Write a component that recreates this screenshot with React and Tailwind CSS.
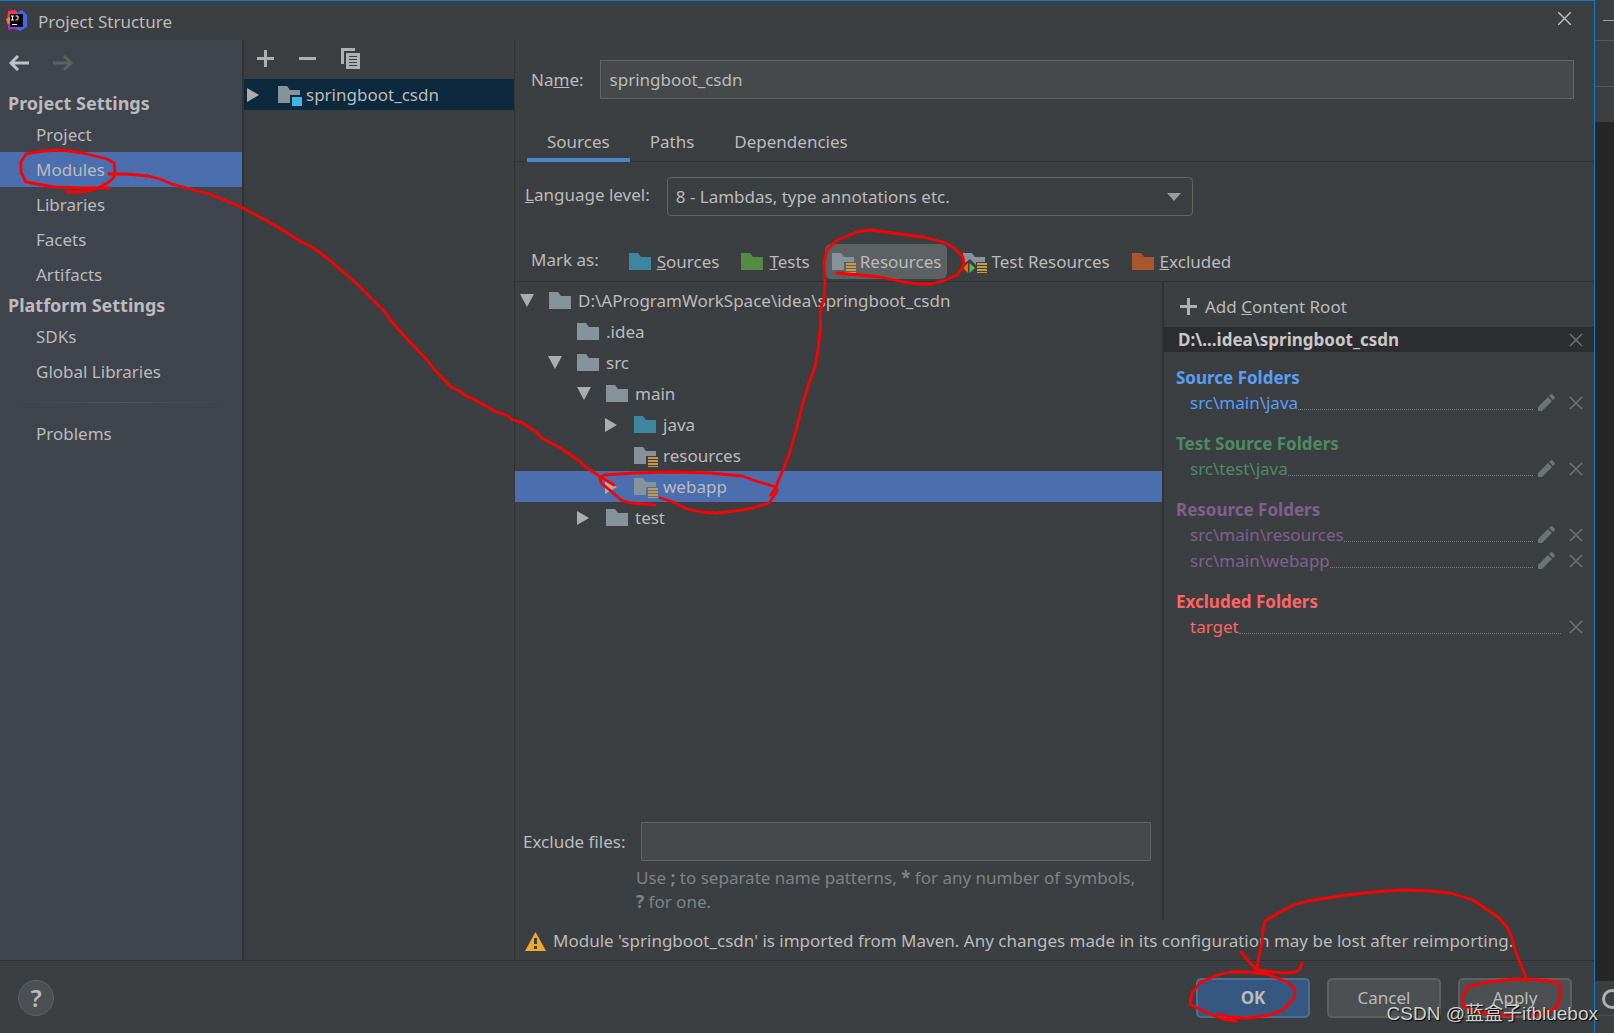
import React, { useState } from 'react';

const FOLDER_GREY = '#87939a';

const Folder = ({ color = FOLDER_GREY, badge }) => (
  <svg width="25" height="22" viewBox="0 0 25 22" className="shrink-0" aria-hidden="true">
    {badge === 'testResources' ? (
      <path d="M1 2h9l3 4h10v5H14v3L8 8l-7 6z" fill={color} />
    ) : (
      <path d={badge ? 'M1 2h9l3 4h10v5H13v8H1z' : 'M1 2h9l3 4h10v13H1z'} fill={color} />
    )}
    {badge === 'module' && <rect x="15" y="13" width="10" height="9" fill="#40b6e0" />}
    {(badge === 'resources' || badge === 'testResources') && (
      <g fill="#c79a45">
        <rect x="15" y="12" width="10" height="2" />
        <rect x="15" y="15" width="10" height="2" />
        <rect x="15" y="18" width="10" height="2" />
        <rect x="15" y="21" width="10" height="1" />
      </g>
    )}
    {badge === 'testResources' && (
      <>
        <path d="M6 12v10L1 17z" fill="#f26522" />
        <path d="M7.500 12l5.500 5l-5.500 5z" fill="#62b543" />
      </>
    )}
  </svg>
);

const Arrow = ({ open }) => (
  <svg width="14" height="14" viewBox="0 0 14 14" className="shrink-0" aria-hidden="true">
    <path d={open ? 'M0 0h14L7 13z' : 'M0 0l12 7L0 14z'} fill="#adadad" />
  </svg>
);

const Cross = () => (
  <svg width="14" height="14" viewBox="0 0 14 14" aria-hidden="true">
    <path d="M1 1l12 12M13 1L1 13" stroke="#6e7375" strokeWidth="1.5" />
  </svg>
);

const Pencil = () => (
  <svg width="18" height="18" viewBox="0 0 18 18" aria-hidden="true">
    <path d="M1 17v-4L11 3l4 4L5 17zM12 2l1.500-1.500q1-.8 2 0l2 2q.8 1 0 2L16 6z" fill="#6e7375" />
  </svg>
);

const Plus = () => (
  <svg width="17" height="17" viewBox="0 0 17 17" aria-hidden="true">
    <path d="M8.500 0v17M0 8.500h17" stroke="#afb1b3" strokeWidth="3" />
  </svg>
);

const Logo = () => (
  <svg width="21" height="21" viewBox="0 0 21 21" aria-hidden="true">
    <path d="M2 1l7-1l4 4l-5 6l-7 1z" fill="#fe315d" />
    <path d="M0 9l4-2l2 7l-4 1z" fill="#fc801d" />
    <path d="M12 2l4-2l5 5v12l-7 4l-6-3z" fill="#3b6bea" />
    <path d="M2 14l4-2l8 8l-7-1l-5 1z" fill="#a333c8" />
    <rect x="4" y="4" width="13" height="13" fill="#050505" />
    <path d="M5 6h3M5 10h3M6.500 6v4M9.500 6H12v3q0 1-2.500 1" stroke="#fff" strokeWidth="1" fill="none" />
    <rect x="6" y="14" width="5" height="1" fill="#fff" />
  </svg>
);

const projectItems = ['Project', 'Modules', 'Libraries', 'Facets', 'Artifacts'];
const platformItems = ['SDKs', 'Global Libraries'];

const tree = [
  { name: 'D:\\AProgramWorkSpace\\idea\\springboot_csdn', pad: 'pl-[5px]', open: true },
  { name: '.idea', pad: 'pl-[33px]' },
  { name: 'src', pad: 'pl-[33px]', open: true },
  { name: 'main', pad: 'pl-[62px]', open: true },
  { name: 'java', pad: 'pl-[90px]', open: false, color: '#3e86a0' },
  { name: 'resources', pad: 'pl-[90px]', badge: 'resources' },
  { name: 'webapp', pad: 'pl-[90px]', open: false, badge: 'resources' },
  { name: 'test', pad: 'pl-[62px]', open: false },
];

const folderGroups = [
  { title: 'Source Folders', color: 'text-[#589df6]', items: ['src\\main\\java'], editable: true },
  { title: 'Test Source Folders', color: 'text-[#4d8b63]', items: ['src\\test\\java'], editable: true },
  { title: 'Resource Folders', color: 'text-[#80608f]', items: ['src\\main\\resources', 'src\\main\\webapp'], editable: true },
  { title: 'Excluded Folders', color: 'text-[#ff6464]', items: ['target'], editable: false },
];

// Red pen strokes drawn over the dialog
const strokes = [
  '109,188 83,188 54,187 26,182 21,172 21,162 26,154 43,151 62,150 83,153 107,159 114,163 115,170 114,177 109,182 100,187 92,190 83,192 67,192',
  '109,174 127,174 148,176 160,179 172,184 190,189 210,194 224,200 243,208 269,222 284,231 300,241 312,247 327,258 341,270 355,282 370,297 386,313 391,321 408,340 427,360 434,369 451,387 459,391 468,397 472,398 496,412 507,415 513,420 521,422 535,431 542,438 562,449 581,462 583,465 599,476 614,485',
  '655,505 631,503 621,500 611,491 601,483 600,478 604,475 635,473 671,472 710,473 742,476 756,481 776,487 777,490 776,493 769,503 753,508 735,511 717,513 700,512 687,509 675,503 667,500 660,498',
  '771,495 777,485 778,481 783,470 790,452 796,430 803,403 809,383 815,367 818,350 820,333 821,308 824,298 825,285 824,262 827,250 837,240 845,237 857,232 870,230 900,234 923,237 943,242 953,247 963,257 964,263 963,267 957,275 943,281 931,284 920,284 903,282 880,277 860,275 837,273',
  '1527,980 1521,965 1515,950 1512,938 1507,927 1498,917 1486,909 1473,900 1460,896 1450,893 1430,891 1403,890 1373,892 1340,896 1308,901 1294,905 1280,912 1265,921 1263,930 1262,943 1259,955 1257,968',
  '1241,952 1250,963 1257,970 1273,972 1285,973 1296,972 1300,969 1302,963',
  '1237,1021 1223,1019 1207,1013 1190,1004 1192,993 1200,983 1217,975 1231,972 1247,972 1267,974 1287,982 1294,988 1295,993 1294,998 1283,1010 1270,1015 1247,1018 1230,1017 1218,1014',
  '1515,1016 1493,1014 1473,1012 1463,1005 1462,997 1468,987 1487,982 1517,979 1540,980 1557,982 1560,988 1561,993 1557,1007 1547,1013 1531,1015',
];

const NavItem = ({ label, active, onClick }) => (
  <button
    type="button"
    onClick={onClick}
    className={`block h-[35px] w-full pl-9 text-left ${active ? 'bg-[#4b6eaf]' : ''}`}
  >
    {label}
  </button>
);

const Sidebar = () => {
  const [active, setActive] = useState('Modules');

  return (
    <nav className="w-[244px] shrink-0 border-r-2 border-[#323232] bg-[#40444d]">
      <div className="flex h-[50px] items-center gap-6 pl-[9px] pb-1">
        <button type="button" aria-label="Back">
          <svg width="20" height="16" viewBox="0 0 20 16">
            <path d="M9 1L2 8l7 7M2 8h18" stroke="#c0c2c4" strokeWidth="3" fill="none" />
          </svg>
        </button>
        <button type="button" aria-label="Forward">
          <svg width="20" height="16" viewBox="0 0 20 16">
            <path d="M11 1l7 7l-7 7M18 8H0" stroke="#5e6062" strokeWidth="3" fill="none" />
          </svg>
        </button>
      </div>
      <h2 className="h-[27px] pl-2 text-lg leading-[27px] font-bold">Project Settings</h2>
      {projectItems.map((label) => (
        <NavItem key={label} label={label} active={active === label} onClick={() => setActive(label)} />
      ))}
      <h2 className="h-[27px] pl-2 text-lg leading-[27px] font-bold">Platform Settings</h2>
      {platformItems.map((label) => (
        <NavItem key={label} label={label} active={active === label} onClick={() => setActive(label)} />
      ))}
      <div className="mx-1 my-[13px] h-px bg-linear-to-r from-transparent via-[#54554f] to-transparent" />
      <NavItem label="Problems" active={active === 'Problems'} onClick={() => setActive('Problems')} />
    </nav>
  );
};

const ModuleList = () => (
  <section className="w-[271px] shrink-0 border-r border-[#323232]">
    <div className="flex h-[39px] items-center gap-[25px] pl-[13px] pb-0.5">
      <button type="button" aria-label="Add"><Plus /></button>
      <button type="button" aria-label="Remove">
        <svg width="17" height="17" viewBox="0 0 17 17">
          <path d="M0 8.500h17" stroke="#afb1b3" strokeWidth="3" />
        </svg>
      </button>
      <button type="button" aria-label="Copy">
        <svg width="20" height="21" viewBox="0 0 20 21">
          <path d="M0 0h14v3H3v13H0z" fill="#afb1b3" />
          <path d="M5 5h14v16H5z" fill="#afb1b3" />
          <path d="M8 8.500h8M8 11.500h8M8 14.500h8M8 17.500h8" stroke="#3c3f41" />
        </svg>
      </button>
    </div>
    <div className="flex h-[31px] items-center bg-[#0d293e] pl-[3px]">
      <Arrow />
      <span className="ml-4 mr-1"><Folder badge="module" /></span>
      <span>springboot_csdn</span>
    </div>
  </section>
);

const MarkButton = ({ color, badge, active, children }) => (
  <button
    type="button"
    className={`flex h-[35px] items-center gap-1 rounded-md px-1.5 whitespace-nowrap ${active ? 'bg-[#5c6164]' : ''}`}
  >
    <Folder color={color} badge={badge} />
    <span>{children}</span>
  </button>
);

const SourceTree = () => (
  <div className="flex min-w-0 flex-1 flex-col border-r-2 border-[#323232]">
    <ul className="flex-1 pt-[3px]">
      {tree.map((row) => (
        <li
          key={row.name}
          className={`flex h-[31px] items-center ${row.pad} ${row.name === 'webapp' ? 'bg-[#4b6eaf]' : ''}`}
        >
          <span className="w-7">{row.open !== undefined && <Arrow open={row.open} />}</span>
          <Folder color={row.color} badge={row.badge} />
          <span className="ml-[5px]">{row.name}</span>
        </li>
      ))}
    </ul>
    <div className="flex items-center gap-[15px] pr-[11px] pl-2">
      <label htmlFor="exclude" className="shrink-0">Exclude files:</label>
      <input
        id="exclude"
        type="text"
        className="h-[39px] min-w-0 flex-1 border border-[#646464] bg-[#45494a] px-2 outline-none"
      />
    </div>
    <p className="pt-[5px] pr-3 pb-1.5 pl-[121px] leading-6 text-[#808284]">
      Use <b>;</b> to separate name patterns, <b>*</b> for any number of symbols,
      <br />
      <b>?</b> for one.
    </p>
  </div>
);

const ContentRoots = () => (
  <aside className="w-[430px] shrink-0">
    <button type="button" className="flex h-[45px] items-center gap-2 pt-1 pl-4">
      <Plus />
      <span>Add <u>C</u>ontent Root</span>
    </button>
    <div className="flex h-[25px] items-center justify-between bg-[#2b2d2f] pr-[11px] pl-[14px] font-bold text-[#c8c8c8]">
      <span>D:\...idea\springboot_csdn</span>
      <button type="button" aria-label="Remove content root"><Cross /></button>
    </div>
    <div className="flex flex-col gap-[15px] pt-[13px] pr-[11px] pl-3">
      {folderGroups.map((group) => (
        <section key={group.title} className={group.color}>
          <h3 className="leading-[25px] font-bold">{group.title}</h3>
          {group.items.map((item) => (
            <div key={item} className="flex h-[26px] items-center pl-[14px]">
              <span>{item}</span>
              <span className="mt-3 flex-1 border-b border-dotted border-[#7a7e80]" />
              {group.editable && (
                <button type="button" aria-label={`Edit ${item}`} className="mr-1.5 ml-1"><Pencil /></button>
              )}
              <button type="button" aria-label={`Remove ${item}`} className="ml-2"><Cross /></button>
            </div>
          ))}
        </section>
      ))}
    </div>
  </aside>
);

const ModuleEditor = () => {
  const [name, setName] = useState('springboot_csdn');

  return (
    <main className="flex min-w-0 flex-1 flex-col">
      <div className="flex items-center gap-4 pt-5 pr-5 pl-4">
        <label htmlFor="name">Na<u>m</u>e:</label>
        <input
          id="name"
          type="text"
          value={name}
          onChange={(e) => setName(e.target.value)}
          className="h-[39px] min-w-0 flex-1 border border-[#646464] bg-[#45494a] px-[9px] outline-none"
        />
      </div>

      <div role="tablist" className="mt-[23px] flex h-10 border-b border-[#323232] pl-3">
        <button type="button" role="tab" aria-selected="true" className="h-10 border-b-4 border-[#4a88c7] px-5 pt-1">Sources</button>
        <button type="button" role="tab" aria-selected="false" className="h-10 border-b-4 border-transparent px-5 pt-1">Paths</button>
        <button type="button" role="tab" aria-selected="false" className="h-10 border-b-4 border-transparent px-5 pt-1">Dependencies</button>
      </div>

      <div className="mt-[15px] flex items-center gap-[17px] pl-[10px]">
        <label htmlFor="level" className="pb-1"><u>L</u>anguage level:</label>
        <div className="relative w-[526px]">
          <select
            id="level"
            className="h-[39px] w-full appearance-none rounded border border-[#646464] bg-[#3c3f41] px-2 outline-none"
          >
            <option>8 - Lambdas, type annotations etc.</option>
          </select>
          <svg width="14" height="8" viewBox="0 0 14 8" className="pointer-events-none absolute top-4 right-3">
            <path d="M0 0h14L7 8z" fill="#9a9da0" />
          </svg>
        </div>
      </div>

      <div className="flex items-center border-b border-[#323232] pt-[28px] pb-[2px] pl-4">
        <span className="mr-[23px] pb-1">Mark as:</span>
        <div className="flex gap-[9px]">
          <MarkButton color="#3e86a0"><u>S</u>ources</MarkButton>
          <MarkButton color="#548b41"><u>T</u>ests</MarkButton>
          <MarkButton badge="resources" active>Resources</MarkButton>
          <MarkButton badge="testResources">Test Resources</MarkButton>
          <MarkButton color="#a9572d"><u>E</u>xcluded</MarkButton>
        </div>
      </div>

      <div className="flex flex-1">
        <SourceTree />
        <ContentRoots />
      </div>

      <div className="flex h-10 items-center gap-[7px] pt-0.5 pl-[10px]">
        <svg width="21" height="19" viewBox="0 0 21 19">
          <path d="M10.500 0L21 19H0z" fill="#f0a732" />
          <path d="M9 6h3v6H9zM9 14h3v3H9z" fill="#3c3f41" />
        </svg>
        <span className="whitespace-nowrap">
          Module 'springboot_csdn' is imported from Maven. Any changes made in its configuration may be lost after reimporting.
        </span>
      </div>
    </main>
  );
};

const Footer = () => (
  <footer className="flex h-[73px] items-center border-t border-[#323232] pt-0.5 pr-[22px] pl-[18px]">
    <button type="button" aria-label="Help" className="size-9 rounded-full border border-[#5e6366] bg-[#4c5052] text-2xl leading-8 font-semibold">?</button>
    <div className="ml-auto flex gap-[17px]">
      <button type="button" className="h-10 w-[114px] rounded-[5px] border-2 border-[#4c708c] bg-[#365880] font-bold">OK</button>
      <button type="button" className="h-10 w-[114px] rounded-[5px] border-2 border-[#5e6060] bg-[#4c5052]">Cancel</button>
      <button type="button" className="h-10 w-[114px] rounded-[5px] border-2 border-[#5e6060] bg-[#4c5052]">Apply</button>
    </div>
  </footer>
);

// Slice of the IDE window visible to the right of the dialog
const IdeEdge = () => (
  <div className="flex w-[19px] shrink-0 flex-col overflow-hidden bg-[#262626]">
    <div className="flex h-10 items-center bg-[#3c3f41] pl-2">
      <span className="h-px w-full bg-[#a0a0a0]" />
    </div>
    <div className="h-[46px] border-t border-[#55585a] bg-[#3c3f41]" />
    <div className="h-9 border-t border-[#55585a] bg-[#3c3f41]" />
    <div className="flex-1" />
    <div className="h-[35px] border-b border-[#4a4d4f] bg-[#3c3f41] pt-2 pl-[7px]">
      <svg width="20" height="20" viewBox="0 0 20 20">
        <circle cx="10" cy="10" r="8.500" stroke="#afb1b3" strokeWidth="3" fill="none" />
      </svg>
    </div>
    <div className="h-[17px] bg-[#3c3f41]" />
  </div>
);

const App = () => {
  return (
    <div className="relative flex min-h-screen overflow-hidden bg-[#3c3f41] font-['Noto_Sans','Noto_Sans_CJK_SC',sans-serif] text-[17px] text-[#bbbbbb]">
      <div className="flex min-w-0 flex-1 flex-col border-t border-r border-[#1578c8]">
        <header className="flex h-[39px] items-center pl-1.5">
          <Logo />
          <h1 className="ml-[11px] pt-0.5">Project Structure</h1>
          <button type="button" aria-label="Close" className="mr-[23px] mb-1 ml-auto">
            <svg width="13" height="13" viewBox="0 0 13 13">
              <path d="M0 0l13 13M13 0L0 13" stroke="#bbbbbb" strokeWidth="1.500" />
            </svg>
          </button>
        </header>
        <div className="flex flex-1">
          <Sidebar />
          <ModuleList />
          <ModuleEditor />
        </div>
        <Footer />
      </div>
      <IdeEdge />

      <svg width="1614" height="1033" viewBox="0 0 1614 1033" className="pointer-events-none absolute top-0 left-0" aria-hidden="true">
        <g fill="none" stroke="#fe0000" strokeWidth="2.800" strokeLinecap="round" strokeLinejoin="round">
          {strokes.map((points) => (
            <polyline key={points} points={points} />
          ))}
        </g>
      </svg>
      <span className="absolute right-4 bottom-[5px] font-['Liberation_Sans','Noto_Sans_CJK_SC',sans-serif] text-[19px] leading-7 text-[#d0d0d0] [text-shadow:1px_1px_1px_#000]">
        CSDN @蓝盒子itbluebox
      </span>
    </div>
  );
};

export default App;
